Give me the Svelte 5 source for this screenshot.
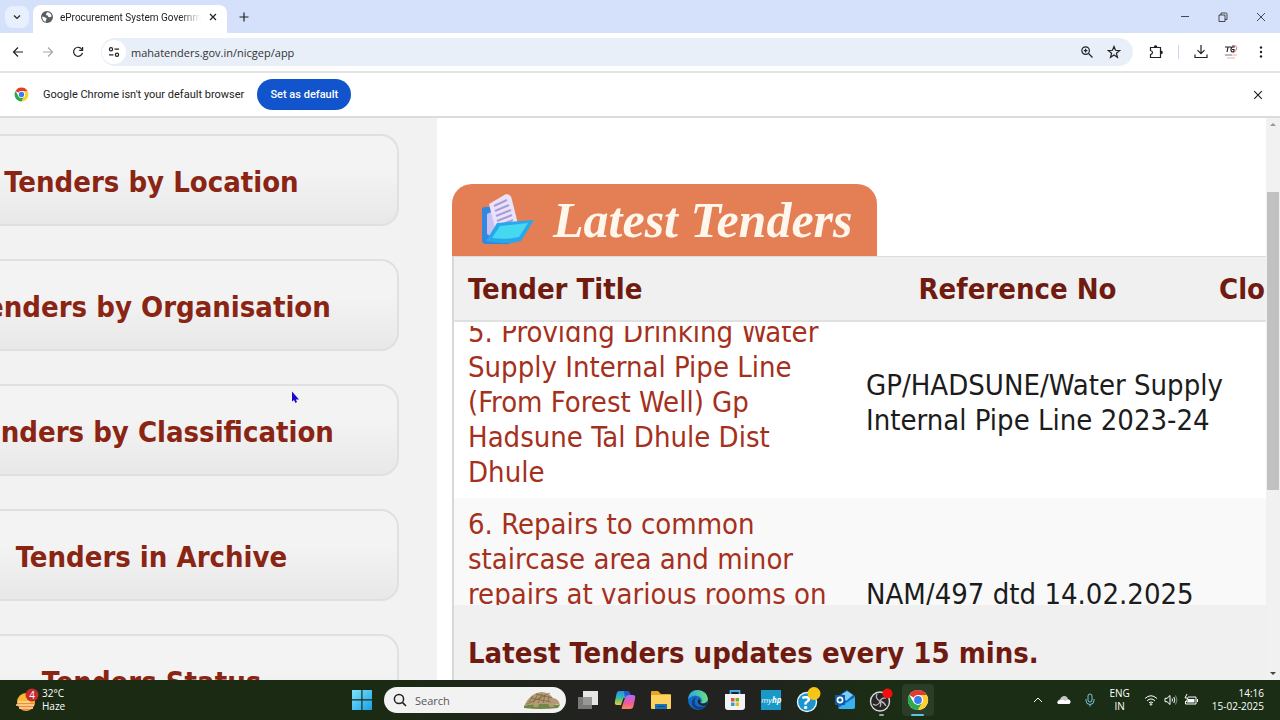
<script lang="ts">
    let address = 'mahatenders.gov.in/nicgep/app';
    let query = '';

    let menu = [
        'Tenders by Location',
        'Tenders by Organisation',
        'Tenders by Classification',
        'Tenders in Archive',
        'Tenders Status'
    ];

    let tenders = [
        {
            title: '5. Providng Drinking Water Supply Internal Pipe Line (From Forest Well) Gp Hadsune Tal Dhule Dist Dhule',
            ref: 'GP/HADSUNE/Water Supply Internal Pipe Line 2023-24'
        },
        {
            title: '6. Repairs to common staircase area and minor repairs at various rooms on',
            ref: 'NAM/497 dtd 14.02.2025'
        }
    ];
</script>

{#snippet chromeLogo()}
    <svg class="chrome-logo" viewBox="0 0 48 48" aria-hidden="true">
        <circle cx="24" cy="24" r="22" fill="#fff" />
        <path d="M24 24 4.9 13A22 22 0 0 1 43.1 13H24Z" fill="#e33b2e" />
        <path d="M4.9 13A22 22 0 0 0 24 46L33.5 29.5 24 24 14.5 29.5Z" fill="#2da94f" />
        <path d="M43.1 13A22 22 0 0 1 24 46L33.5 29.5A11 11 0 0 0 24 13Z" fill="#fdd02f" />
        <circle cx="24" cy="24" r="11" fill="#fff" />
        <circle cx="24" cy="24" r="8.5" fill="#3b7ded" />
    </svg>
{/snippet}

<div class="screen">
    <header class="tabs">
        <button class="tab-search" aria-label="Search tabs">
            <svg width="10" height="10" viewBox="0 0 10 10"><path d="M2 3.5 5 6.5 8 3.5" /></svg>
        </button>
        <div class="tab">
            <svg class="globe" width="12" height="12" viewBox="0 0 12 12">
                <circle cx="6" cy="6" r="6" fill="#5a5e63" />
                <path d="M1.2 5.4C3 5.4 3.6 6.5 5 6.8 6 7.2 5.6 8.4 5 9L4.6 10.8C2.4 10.2 1 8 1.2 5.4ZM6 1.2C5.6 2.5 4.8 3 5 3.8 5.4 4.6 6.8 4.2 7 5.2 7.4 6.2 8.6 6.6 10.6 5.4 10.6 3 8.6 1.2 6 1.2Z" fill="#fff" />
            </svg>
            <span class="tab-title">eProcurement System Governm</span>
            <button aria-label="Close tab">
                <svg width="10" height="10" viewBox="0 0 10 10"><path d="M2 2 8 8M8 2 2 8" /></svg>
            </button>
        </div>
        <button class="new-tab" aria-label="New tab">
            <svg width="12" height="12" viewBox="0 0 12 12"><path d="M6 1.5V10.5M1.5 6H10.5" /></svg>
        </button>
        <div class="window-buttons">
            <button aria-label="Minimise"><svg width="10" height="10" viewBox="0 0 10 10"><path d="M1 4.5H9" /></svg></button>
            <button aria-label="Restore">
                <svg width="10" height="10" viewBox="0 0 10 10"><path d="M1 3H7V9.5H1ZM3 3V1H8Q9 1 9 2V7.5H7" /></svg>
            </button>
            <button aria-label="Close"><svg width="10" height="10" viewBox="0 0 10 10"><path d="M1 1 9 9M9 1 1 9" /></svg></button>
        </div>
    </header>

    <nav class="toolbar">
        <div class="nav-buttons">
            <button aria-label="Back"><svg width="12" height="12" viewBox="0 0 12 12"><path d="M11 6H1.5M6 1.5 1.5 6 6 10.5" /></svg></button>
            <button class="faded" aria-label="Forward"><svg width="12" height="12" viewBox="0 0 12 12"><path d="M1 6H10.5M6 1.5 10.5 6 6 10.5" /></svg></button>
            <button aria-label="Reload"><svg width="12" height="12" viewBox="0 0 12 12"><path d="M10 3.5A4.5 4.5 0 1 0 10.5 6.8M10.6 1V4.3H7.2" /></svg></button>
        </div>
        <div class="omnibox">
            <button class="site-info" aria-label="View site information">
                <svg width="12" height="12" viewBox="0 0 12 12"><circle cx="3" cy="3.2" r="1.6" /><path d="M6.5 3.2H11M1 8.8H5.5" /><circle cx="9" cy="8.8" r="1.6" /></svg>
            </button>
            <input type="text" aria-label="Address" bind:value={address} />
            <button aria-label="Zoom"><svg width="14" height="14" viewBox="0 0 14 14"><circle cx="5.6" cy="5.6" r="3.8" /><path d="M8.5 8.5 12.5 12.5M3.8 5.6H7.4M5.6 3.8V7.4" /></svg></button>
            <button aria-label="Bookmark"><svg width="14" height="14" viewBox="0 0 14 14"><path d="M7 1.5 8.5 5.3 12.6 5.6 9.4 8.2 10.5 12.3 7 10 3.5 12.3 4.6 8.2 1.4 5.6 5.5 5.3Z" /></svg></button>
        </div>
        <div class="tools">
            <button aria-label="Extensions"><svg width="16" height="16" viewBox="0 0 16 16"><path d="M2.5 3.5H12.5V13.5H2.5V10.5Q4.5 10 4.5 8.5T2.5 6.5Z" /><path d="M6.4 3A1.2 1.2 0 0 1 8.8 3ZM13 7.2A1.2 1.2 0 0 1 13 9.6Z" fill="#222" /></svg></button>
            <span class="divider"></span>
            <button aria-label="Downloads"><svg width="16" height="16" viewBox="0 0 16 16"><path d="M8 1V9.5M4.5 6.2 8 9.7 11.5 6.2M2 10.5V13.5H14V10.5" /></svg></button>
            <button aria-label="Profile">
                <svg width="14" height="16" viewBox="0 0 14 16">
                    <path d="M1 3H7M4 3 3 8M11 3Q7 2 7 5.5 7 9 10 7.2V5.5H8" />
                    <path d="M8 1.5Q14 1 12.5 5 11.5 8 9 9" stroke="#dc5a59" stroke-width=".8" />
                    <path d="M1 11H8" stroke="#555" stroke-width=".8" /><path d="M8 11H13M3 14H11" stroke="#e29a9a" stroke-width=".8" />
                </svg>
            </button>
            <button aria-label="Menu"><svg width="16" height="14" viewBox="0 0 16 14"><g fill="#222" stroke="none"><circle cx="8" cy="2.5" r="1.2" /><circle cx="8" cy="7" r="1.2" /><circle cx="8" cy="11.5" r="1.2" /></g></svg></button>
        </div>
    </nav>

    <div class="infobar">
        {@render chromeLogo()}
        <span>Google Chrome isn't your default browser</span>
        <button class="default">Set as default</button>
        <button class="dismiss" aria-label="Dismiss"><svg width="10" height="10" viewBox="0 0 10 10"><path d="M1.2 1.2 8.8 8.8M8.8 1.2 1.2 8.8" /></svg></button>
    </div>

    <main class="page">
        <aside>
            <div class="menu">
                {#each menu as item}
                    <a href="#menu">{item}</a>
                {/each}
            </div>
        </aside>

        <section class="latest">
            <h2>
                <svg width="56" height="56" viewBox="0 0 56 56" aria-hidden="true">
                    <path d="M2 17Q2 15 5 15H14L36 26V46Q30 53 25 52H6Q2 52 2 48Z" fill="#3288e0" />
                    <path d="M7 22 24 14 26 35 12 45 7 42Z" fill="#c7c2f3" />
                    <path d="M9 12 26 2Q31 2 32 8L38 32 16 40Z" fill="#eae2fa" />
                    <path d="M14 14 27 8M15 19 29 13M16 24 31 18M17 29 32 23M18 34 33 28" stroke="#aa9cd9" stroke-width="2" />
                    <path d="M17 31 54 28Q48 38 41 49Q30 53 6 49Z" fill="#27a8ec" />
                    <path d="M20 34 48 31 39 45Q27 48 12 46Z" fill="#45d8f0" />
                </svg>
                Latest Tenders
            </h2>
            <div class="panel">
                <table class="head">
                    <thead>
                        <tr><th class="title">Tender Title</th><th class="ref">Reference No</th><th>Clo</th></tr>
                    </thead>
                </table>
                <div class="marquee">
                    <table>
                        <tbody>
                            {#each tenders as tender}
                                <tr>
                                    <td class="title"><a href="#tender">{tender.title}</a></td>
                                    <td>{tender.ref}</td>
                                </tr>
                            {/each}
                        </tbody>
                    </table>
                </div>
                <p>Latest Tenders updates every 15 mins.</p>
            </div>
        </section>

        <div class="scrollbar">
            <svg width="8" height="6" viewBox="0 0 8 6"><path d="M1 5 4 2 7 5Z" fill="#999" /></svg>
            <div class="track"><div class="thumb"></div></div>
            <svg width="8" height="6" viewBox="0 0 8 6"><path d="M1 1 4 4 7 1Z" fill="#444" /></svg>
        </div>
    </main>

    <footer class="taskbar">
        <button class="weather">
            <svg width="24" height="24" viewBox="0 0 24 24">
                <circle cx="11" cy="14" r="9" fill="#f7b930" />
                <path d="M2 15H20Q19 21 11 23 5 22 2 15Z" fill="#ef8b3b" />
                <path d="M3 14H15M1 17H19M4 20H18" stroke="#ffd9a0" stroke-width="1.6" />
                <circle cx="17" cy="7" r="6.5" fill="#c42b2f" />
                <text x="17" y="11" text-anchor="middle">4</text>
            </svg>
            <span>32°C<br />Haze</span>
        </button>

        <div class="center">
            <button class="app" aria-label="Start">
                <svg width="22" height="22" viewBox="0 0 22 22">
                    <defs><linearGradient id="win" x2="1" y2="1"><stop stop-color="#7fe3fb" /><stop offset="1" stop-color="#189fe6" /></linearGradient></defs>
                    <path d="M1 1H10.3V10.3H1ZM11.5 1H21V10.3H11.5ZM1 11.5H10.3V21H1ZM11.5 11.5H21V21H11.5Z" fill="url(#win)" />
                </svg>
            </button>
            <label class="search">
                <svg width="14" height="14" viewBox="0 0 14 14"><circle cx="6" cy="6" r="4.6" fill="none" stroke="#222" stroke-width="1.5" /><path d="M9.4 9.4 13 13" stroke="#222" stroke-width="1.6" /></svg>
                <input type="text" placeholder="Search" aria-label="Search" bind:value={query} />
                <svg width="40" height="20" viewBox="0 0 40 20">
                    <path d="M2 16Q12 12 38 15L36 18Q18 20 2 18Z" fill="#718745" />
                    <path d="M2 16Q8 3 19 2 27 2 31 8 37 9 38 15L33 14 31 17H28L26 14H17L16 17H12L11 14Z" fill="#b39a72" />
                    <path d="M7 12 11 6M11 13 16 4M16 13 20 4M21 13 23 5M26 12 27 6M9 8 29 12M14 4 30 8M5 14 28 3" stroke="#6b573d" stroke-width=".6" />
                </svg>
            </label>
            <div class="apps">
                <button class="app" aria-label="Task view">
                    <svg width="22" height="22" viewBox="0 0 22 22"><path d="M6 2H21V16H6Z" fill="#e6e6e6" /><path d="M1 8H15V20H1Z" fill="#888" fill-opacity=".85" /></svg>
                </button>
                <button class="app" aria-label="Copilot">
                    <svg width="22" height="22" viewBox="0 0 22 22">
                        <defs>
                            <linearGradient id="cpa" x2="0" y2="1"><stop stop-color="#2a8cf0" /><stop offset=".5" stop-color="#35bfa0" /><stop offset="1" stop-color="#f6c530" /></linearGradient>
                            <linearGradient id="cpb" x2="0" y2="1"><stop stop-color="#ae6cf5" /><stop offset=".6" stop-color="#f0599a" /><stop offset="1" stop-color="#fb8c4c" /></linearGradient>
                        </defs>
                        <path d="M5 2H13Q15 2 14.5 4L11 14Q10 16 8 16H3Q0 16 1 12L2.5 5Q3 2 5 2Z" fill="url(#cpa)" />
                        <path d="M15 6H19Q22 6 21 10L19.5 17Q19 20 16 20H9Q7 20 8 18L11 8Q12 6 15 6Z" fill="url(#cpb)" />
                        <path d="M10 2H13Q15.5 2 17 6H14Q12 6 11 9Z" fill="#2458cf" />
                        <path d="M11 9 8.5 16H7L9.5 9Z" fill="#222" />
                    </svg>
                </button>
                <button class="app" aria-label="File Explorer">
                    <svg width="22" height="22" viewBox="0 0 22 22"><path d="M1 3Q1 2 2 2H8L11 5H20Q21 5 21 6V18H1Z" fill="#e6a522" /><path d="M1 6H21V19Q21 20 20 20H2Q1 20 1 19Z" fill="#fdd160" /><path d="M5 15H17V20H5Z" fill="#1672b8" /><path d="M7 17.5H15" stroke="#0e4e87" /></svg>
                </button>
                <button class="app" aria-label="Edge">
                    <svg width="22" height="22" viewBox="0 0 22 22">
                        <defs><linearGradient id="edge" x2="1"><stop stop-color="#2aa5e5" /><stop offset="1" stop-color="#6fe07c" /></linearGradient></defs>
                        <circle cx="11" cy="11" r="10" fill="#1469c4" />
                        <path d="M1 10Q2 1 11 1 20 2 21 10 20 15 14 14 16 11 13 8 7 4 1 10Z" fill="url(#edge)" />
                        <path d="M8 10Q6 17 13 18 17 18 19 16 15 21 10 20 4 18 5 12 6 9 10 8Z" fill="#123f82" />
                        <path d="M13 14Q17 16 20 13L19.5 16Q15 18 11.5 14.5 10 12 12 10 14 11 13 14Z" fill="#222" />
                    </svg>
                </button>
                <button class="app" aria-label="Microsoft Store">
                    <svg width="22" height="22" viewBox="0 0 22 22"><path d="M6.5 5V2H15.5V5" fill="none" stroke="#46a8e4" stroke-width="1.8" /><path d="M1 5H21V18Q21 21 18 21H4Q1 21 1 18Z" fill="#f3f3f3" /><path d="M7 9H10.5V12.5H7Z" fill="#e8502e" /><path d="M11.5 9H15V12.5H11.5Z" fill="#6fb52c" /><path d="M7 13.5H10.5V17H7Z" fill="#299fe0" /><path d="M11.5 13.5H15V17H11.5Z" fill="#f3b51e" /></svg>
                </button>
                <button class="app" aria-label="myHP"><span class="myhp">my<b>hp</b></span></button>
                <button class="app" aria-label="Get help">
                    <svg width="26" height="26" viewBox="0 0 26 26"><circle cx="12" cy="15" r="9.5" fill="#1c94cd" stroke="#e8f4fa" stroke-width="1.4" /><text class="question" x="11" y="22" text-anchor="middle">?</text><circle cx="19" cy="6.5" r="6.5" fill="#f6c518" /></svg>
                </button>
                <button class="app" aria-label="Outlook">
                    <svg width="22" height="22" viewBox="0 0 22 22"><path d="M4 7 13 1 21 7V18Q21 20 19 20H6Q4 20 4 18Z" fill="#1764bd" /><path d="M8 5 13 2 19 6 12 12Z" fill="#7fcdf5" /><path d="M4 19 21 8V18Q21 20 19 20H6Z" fill="#38b2ee" /><path d="M1 6H11V16H1Z" fill="#0f5ba8" /><circle cx="6" cy="11" r="2.6" fill="none" stroke="#fff" stroke-width="1.6" /></svg>
                </button>
                <button class="app running" aria-label="OBS Studio">
                    <svg width="26" height="26" viewBox="0 0 26 26"><circle cx="12" cy="14.5" r="9.5" fill="#252525" stroke="#d8d8d8" stroke-width="1.4" /><path d="M9 7Q7 11 11 13.5 14 16 12 20M18 11Q14 10 12 14M5 17Q9 20 12 15M12 14Q16 15 18 19" fill="none" stroke="#b5b5b5" stroke-width="1.3" /><circle cx="19.5" cy="6.5" r="5" fill="#f50e0e" /></svg>
                </button>
                <button class="app active" aria-label="Chrome">{@render chromeLogo()}</button>
            </div>
        </div>

        <div class="tray">
            <button aria-label="Hidden icons"><svg width="10" height="10" viewBox="0 0 10 10"><path d="M1 7 5 3 9 7" /></svg></button>
            <svg width="14" height="10" viewBox="0 0 14 10"><path d="M3 9Q0 9 .5 6.5 1 4.5 3 4.5 4 1 7.5 1 10 1 11 4 13.5 4.5 13.5 6.5 13.5 9 11 9Z" fill="#c4c4c4" stroke="none" /><path d="M3 9Q0 9 .5 7 5 3 8 6 13 3 13.5 7 13.5 9 11 9Z" fill="#fff" stroke="none" /></svg>
            <svg class="mic" width="10" height="14" viewBox="0 0 10 14"><path d="M3 3A2 2 0 0 1 7 3V7A2 2 0 0 1 3 7ZM1 6V7.5A4 4 0 0 0 9 7.5V6M5 11.5V13.5" /></svg>
            <span class="lang">ENG<br />IN</span>
            <button class="network" aria-label="Network, volume and battery">
                <svg width="14" height="12" viewBox="0 0 14 12"><path d="M1 4.5Q7-1 13 4.5M3 6.8Q7 3 11 6.8M5 8.8Q7 7 9 8.8" /><circle cx="7" cy="10.4" r=".8" /></svg>
                <svg width="14" height="12" viewBox="0 0 14 12"><path d="M1 4.3H3L6 1.5V10.5L3 7.7H1ZM8 4.5Q9 6 8 7.5M9.8 3Q11.8 6 9.8 9" /><path d="M11.5 1.5Q14.5 6 11.5 10.5" stroke="#789070" /></svg>
                <svg width="14" height="12" viewBox="0 0 14 12"><path d="M4 3H12V10H1.5V7M13.5 5V8" /><path d="M4 5H10.5V8.5H3Z" fill="#fff" stroke="none" /><path d="M3 0 1 4H4L2 8" /></svg>
            </button>
            <span class="clock">14:16<br />15-02-2025</span>
        </div>
    </footer>

    <svg class="cursor" width="10" height="14" viewBox="0 0 10 14" aria-hidden="true"><path d="M2 1.5V11.5L4 10 5.5 13 7 12 5.8 9.5H9Z" fill="#1c08cf" /></svg>
</div>

<style>
:global(body) {
    margin: 0;
}

.screen {
    display: flex;
    flex-direction: column;
    height: 100vh;
    overflow: hidden;
    background: #fff;
    color: #222;
    font-family: Roboto, 'Open Sans', sans-serif;
    font-size: 11px;
}

button {
    display: flex;
    align-items: center;
    justify-content: center;
    flex-shrink: 0;
    padding: 0;
    border: 0;
    background: none;
    color: inherit;
    font: inherit;
}

input {
    flex: 1;
    min-width: 0;
    padding: 0;
    border: 0;
    outline: 0;
    background: none;
    color: #333;
    font: inherit;
}

.tabs svg,
.toolbar svg,
.dismiss svg {
    fill: none;
    stroke: #222;
    stroke-width: 1.2;
}

/* tab strip */
.tabs {
    display: flex;
    align-items: center;
    height: 33px;
    flex-shrink: 0;
    background: #d5e1fb;
}

.tab-search {
    width: 24px;
    height: 22px;
    margin: 0 4px 0 5px;
    border-radius: 8px;
    background: #e8effd;
}

.tab {
    display: flex;
    align-items: center;
    align-self: flex-end;
    gap: 7px;
    box-sizing: border-box;
    width: 194px;
    height: 28px;
    padding: 0 9px 4px 8px;
    border-radius: 8px 8px 0 0;
    background: #fff;
}

.tabs .globe {
    stroke: none;
    flex-shrink: 0;
}

.tab-title {
    flex: 1;
    overflow: hidden;
    white-space: nowrap;
    font-size: 10px;
    mask-image: linear-gradient(to right, #000 85%, transparent);
}

.new-tab {
    width: 34px;
}

.window-buttons {
    display: flex;
    gap: 28px;
    margin-left: auto;
    padding-right: 14px;
}

.window-buttons svg {
    stroke-width: 0.8;
}

/* toolbar */
.toolbar {
    display: flex;
    align-items: center;
    height: 38px;
    flex-shrink: 0;
    border-bottom: 2px solid #e2e3e5;
}

.nav-buttons {
    display: flex;
    gap: 18px;
    padding: 0 17px 0 12px;
}

.faded {
    opacity: 0.4;
}

.omnibox {
    display: flex;
    align-items: center;
    flex: 1;
    gap: 13px;
    height: 28px;
    padding: 0 12px 0 1px;
    border-radius: 14px;
    background: #e9eff9;
}

.omnibox input {
    margin-left: -8px;
    font-family: 'Open Sans', 'Noto Sans', sans-serif;
}

.site-info {
    width: 24px;
    height: 24px;
    border-radius: 12px;
    background: #fff;
}

.tools {
    display: flex;
    align-items: center;
    gap: 15px;
    padding: 0 11px 0 15px;
}

.divider {
    width: 1px;
    height: 14px;
    margin: 0 -1px;
    background: #c5d7f5;
}

/* infobar */
.infobar {
    display: flex;
    align-items: center;
    height: 43px;
    flex-shrink: 0;
    padding: 0 17px 0 14px;
    border-bottom: 2px solid #dcdcdc;
}

.infobar .chrome-logo {
    width: 15px;
    height: 15px;
    margin-right: 14px;
}

.default {
    margin-left: 13px;
    width: 94px;
    height: 31px;
    border-radius: 16px;
    background: #1254cb;
    color: #fff;
    font-weight: 500;
}

.dismiss {
    margin-left: auto;
}

/* page */
.page {
    display: flex;
    flex: 1;
    min-height: 0;
    font-family: 'DejaVu Sans Condensed', 'DejaVu Sans', sans-serif;
    font-size: 29px;
    line-height: 35px;
}

aside {
    width: 437px;
    flex-shrink: 0;
    overflow: hidden;
    background: #f2f2f2;
}

/* the page is scrolled sideways, so the menu starts off screen */
.menu {
    display: flex;
    flex-direction: column;
    gap: 33px;
    margin: 16px 38px 0 -96px;
}

.menu a {
    display: flex;
    align-items: center;
    justify-content: center;
    box-sizing: border-box;
    height: 92px;
    padding-top: 4px;
    border: 2px solid #dfe0e0;
    border-radius: 18px;
    background: linear-gradient(#f3f3f3 40%, #e8e8e8);
    color: #8a2514;
    font-weight: bold;
    text-decoration: none;
    white-space: nowrap;
}

.latest {
    display: flex;
    flex-direction: column;
    flex: 1;
    min-width: 0;
    padding: 66px 0 0 15px;
}

h2 {
    display: flex;
    align-items: center;
    gap: 17px;
    box-sizing: border-box;
    width: 425px;
    height: 72px;
    flex-shrink: 0;
    margin: 0;
    padding-left: 28px;
    border-radius: 20px 20px 0 0;
    background: #e37e55;
    color: #fff6ec;
    font-family: 'Liberation Serif', serif;
    font-size: 50px;
    font-style: italic;
    line-height: 60px;
    white-space: nowrap;
}

.panel {
    display: flex;
    flex-direction: column;
    flex: 1;
    min-height: 0;
    border-top: 1px solid #dcdcdc;
    border-left: 2px solid #d8d8d8;
}

table {
    width: 100%;
    border-collapse: collapse;
    table-layout: fixed;
}

.head {
    height: 65px;
    flex-shrink: 0;
    border-bottom: 2px solid #e0e0e0;
    background: #f0f0f0;
    color: #701b10;
}

th {
    padding: 2px 0 0;
    overflow: hidden;
    text-align: left;
    white-space: nowrap;
}

.title {
    width: 384px;
    padding-left: 14px;
}

th.ref {
    width: 303px;
    padding-left: 14px;
    padding-right: 50px;
    text-align: center;
}

.marquee {
    height: 279px;
    flex-shrink: 0;
    margin-top: 4px;
    overflow: hidden;
}

.marquee table {
    margin-top: -20px;
}

td {
    box-sizing: border-box;
    height: 192px;
    padding: 9px 34px 8px 0;
    color: #1c1c1c;
}

td.title {
    width: 412px;
    padding-right: 16px;
    vertical-align: top;
}

td a {
    color: #a5301c;
    text-decoration: none;
}

tr:nth-child(even) {
    background: #f9f9f9;
}

.panel p {
    flex: 1;
    margin: 0;
    padding: 31px 14px 0;
    background: #f0f0f0;
    color: #701b10;
    font-weight: bold;
}

.scrollbar {
    display: flex;
    flex-direction: column;
    align-items: center;
    justify-content: space-between;
    width: 14px;
    padding: 3px 0;
    background: #f1f1f1;
}

.track {
    flex: 1;
    width: 12px;
    padding-top: 65px;
}

.thumb {
    height: 298px;
    background: #c1c1c1;
}

/* taskbar */
.taskbar {
    display: grid;
    grid-template-columns: 1fr auto 1fr;
    align-items: center;
    height: 40px;
    flex-shrink: 0;
    background: linear-gradient(to right, #1b2b13 30%, #222220 46%, #222220 58%, #1b2d15 68%);
    color: #fff;
    font-family: 'Open Sans', 'Noto Sans', sans-serif;
    font-size: 10px;
    line-height: 13px;
}

.weather {
    justify-self: start;
    gap: 3px;
    padding-left: 15px;
    text-align: left;
}

.weather text {
    fill: #fff;
    font-size: 10px;
}

.center {
    display: flex;
    align-items: center;
    gap: 6px;
}

.app {
    position: relative;
    width: 32px;
    height: 32px;
    border-radius: 4px;
}

.search {
    display: flex;
    align-items: center;
    gap: 8px;
    box-sizing: border-box;
    width: 182px;
    height: 26px;
    padding: 0 4px 0 9px;
    border-radius: 13px;
    background: #f2f2f2;
}

.search input {
    font-size: 11px;
}

.search input::placeholder {
    color: #555;
    opacity: 1;
}

.apps {
    display: flex;
    justify-content: space-between;
    width: 362px;
}

.myhp {
    width: 20px;
    height: 20px;
    background: #1899c7;
    font-size: 8px;
    font-style: italic;
    line-height: 19px;
}

.question {
    fill: #fff;
    font-size: 18px;
    font-weight: bold;
}

.app .chrome-logo {
    width: 22px;
    height: 22px;
}

.active {
    background: #2b3d26;
}

.running::after,
.active::after {
    content: '';
    position: absolute;
    bottom: 0;
    width: 5px;
    height: 2px;
    border-radius: 1px;
    background: #9aa596;
}

.active::after {
    width: 13px;
    background: #62bdea;
}

.tray {
    display: flex;
    align-items: center;
    justify-self: end;
    gap: 14px;
    padding-right: 16px;
}

.tray svg {
    fill: none;
    stroke: #fff;
    stroke-width: 1;
}

.tray .mic {
    stroke: #7cc4dc;
}

.network {
    gap: 6px;
}

.lang {
    text-align: center;
}

.clock {
    text-align: right;
}

.cursor {
    position: absolute;
    top: 390px;
    left: 290px;
}
</style>
